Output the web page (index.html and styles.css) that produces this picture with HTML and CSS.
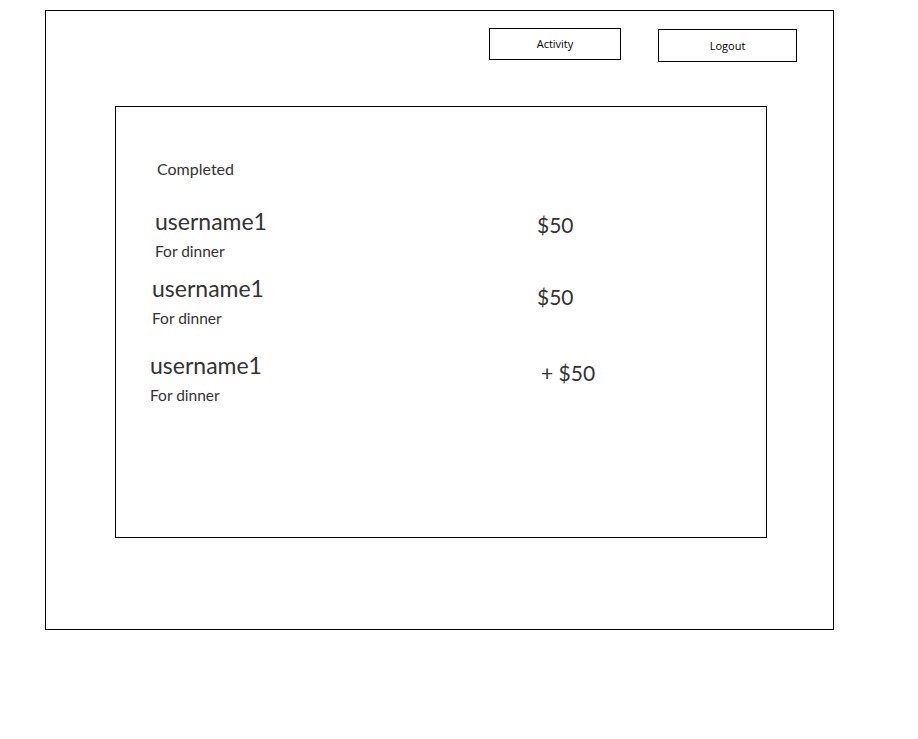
FILE: index.html
```html
<!DOCTYPE html>
<html lang="en">
<head>
<meta charset="utf-8">
<title>Activity</title>
<link rel="stylesheet" href="styles.css">
</head>
<body>
<div class="frame">
  <div class="topbar">
    <button class="btn btn-activity">Activity</button>
    <button class="btn btn-logout">Logout</button>
  </div>
  <div class="panel">
    <div class="heading">Completed</div>
    <div class="txn txn-1">
      <div class="who">
        <div class="user">username1</div>
        <div class="note">For dinner</div>
      </div>
      <div class="amt">$50</div>
    </div>
    <div class="txn txn-2">
      <div class="who">
        <div class="user">username1</div>
        <div class="note">For dinner</div>
      </div>
      <div class="amt">$50</div>
    </div>
    <div class="txn txn-3">
      <div class="who">
        <div class="user">username1</div>
        <div class="note">For dinner</div>
      </div>
      <div class="amt">+ $50</div>
    </div>
  </div>
</div>
</body>
</html>
```
FILE: styles.css
```css
html, body {
  margin: 0;
  padding: 0;
  background: #fff;
}
body {
  font-family: Lato, "Open Sans", sans-serif;
  color: #333;
}
.frame {
  box-sizing: border-box;
  margin: 10px 0 0 45px;
  width: 789px;
  height: 620px;
  border: 1px solid #000;
}
.topbar {
  display: flex;
  align-items: flex-start;
  padding: 17px 0 0 443px;
}
.btn {
  box-sizing: border-box;
  border: 1px solid #000;
  background: #fff;
  color: #000;
  font-family: "Open Sans", sans-serif;
  font-size: 11px;
  padding: 0;
  margin: 0;
  border-radius: 0;
}
.btn-activity {
  width: 132px;
  height: 32px;
  padding-bottom: 2px;
}
.btn-logout {
  width: 139px;
  height: 33px;
  margin: 1px 0 0 37px;
}
.panel {
  box-sizing: border-box;
  margin: 44px 0 0 69px;
  width: 652px;
  height: 432px;
  border: 1px solid #000;
  padding-top: 52px;
}
.heading {
  font-size: 16px;
  line-height: 20px;
  padding-left: 41px;
}
.txn {
  display: grid;
  grid-template-columns: 421px auto;
  align-items: start;
}
.txn-1 { margin-top: 27px; }
.txn-2 { margin-top: 7px; }
.txn-3 { margin-top: 17px; }
.txn-1 .who { padding-left: 39px; }
.txn-2 .who { padding-left: 36px; }
.txn-3 .who { padding-left: 34px; }
.user {
  font-size: 23px;
  line-height: 30px;
}
.note {
  font-size: 15.5px;
  line-height: 30px;
}
.amt {
  font-size: 21px;
  line-height: 30px;
}
.txn-1 .amt { margin-top: 4px; }
.txn-2 .amt { margin-top: 9px; }
.txn-3 .amt { margin-top: 8px; padding-left: 4px; }
```
